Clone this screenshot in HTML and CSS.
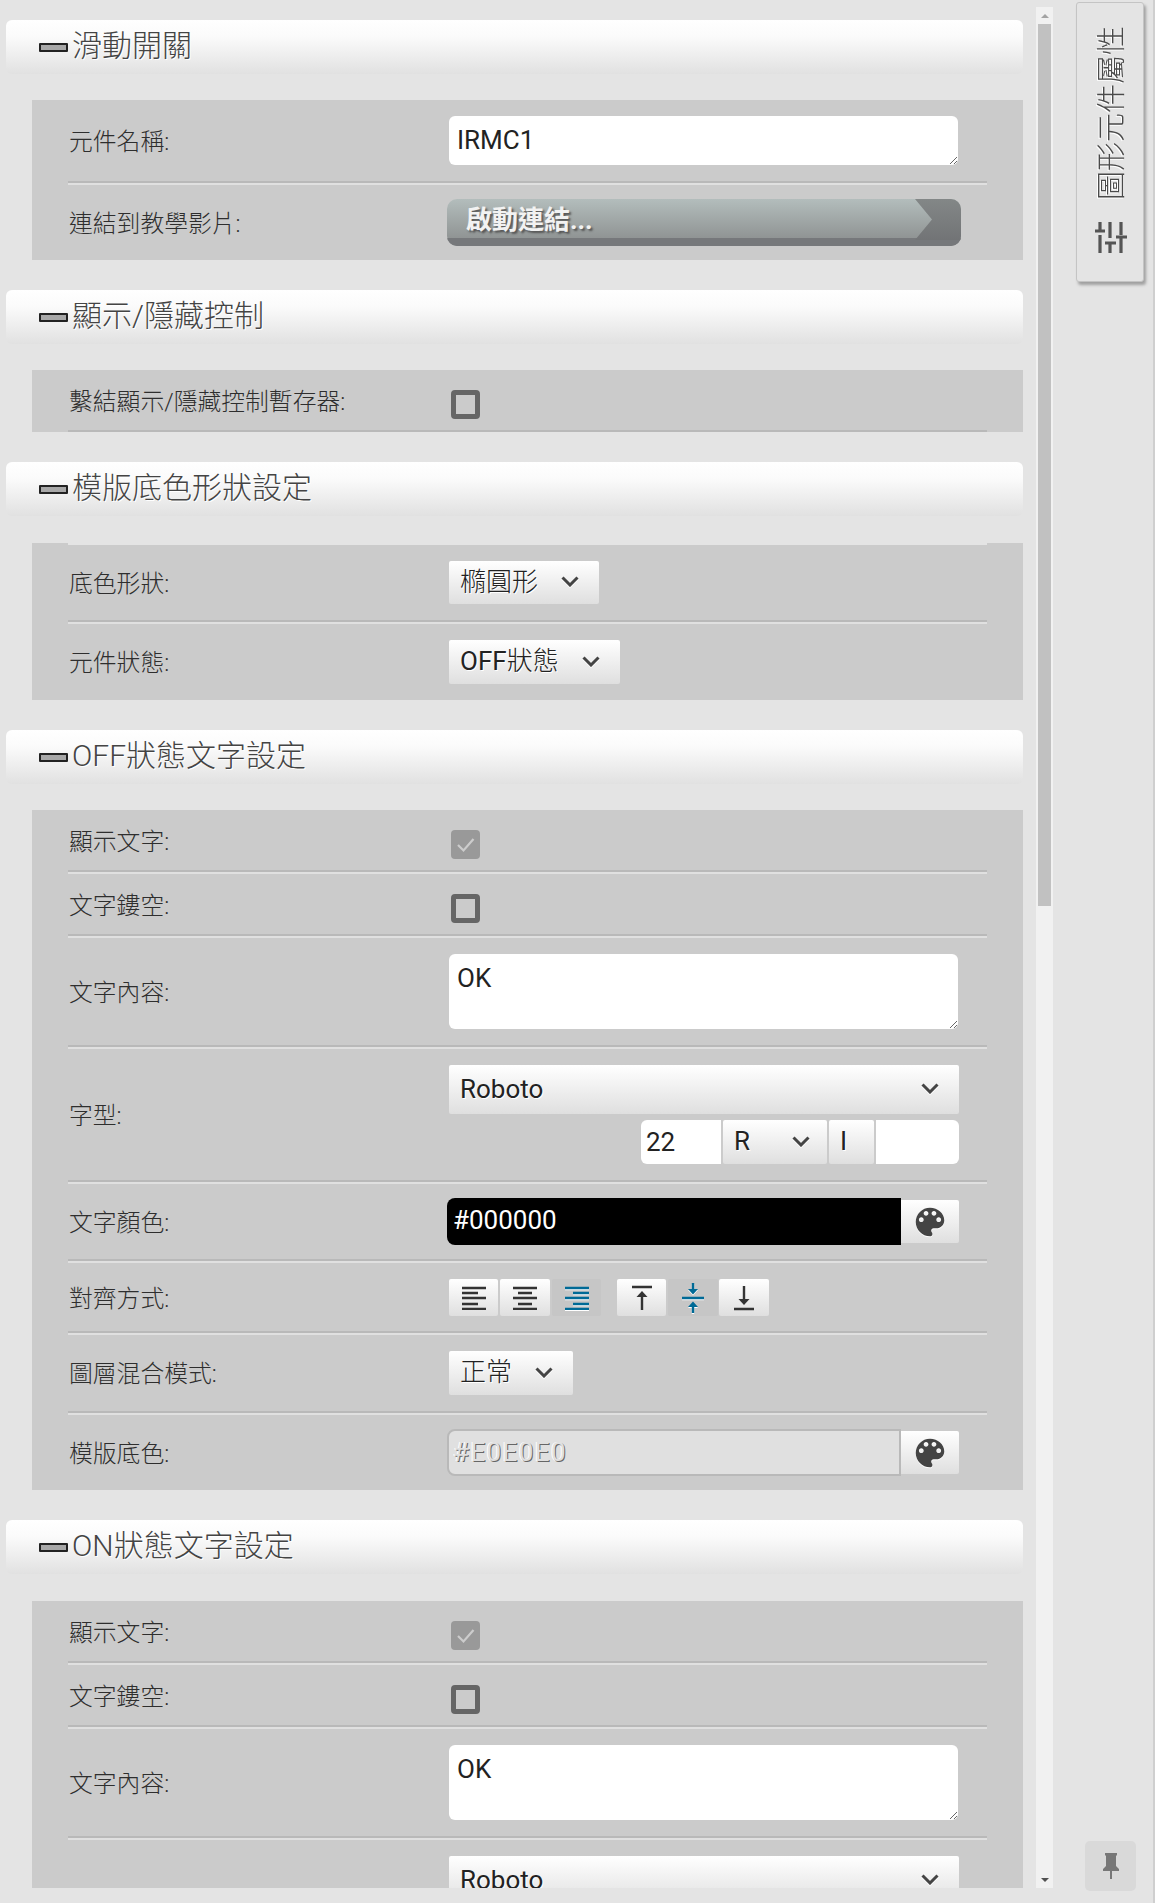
FILE: index.html
```html
<!DOCTYPE html>
<html lang="zh-Hant">
<head>
  <meta charset="UTF-8">
  <title>圖形元件屬性</title>
  <link rel="stylesheet" href="styles.css">
</head>
<body>
  <!-- shared icons -->
  <svg class="sprite" width="0" height="0">
    <symbol id="chevron" viewBox="0 0 18 11"><path d="M1.5 1.5 9 9l7.5-7.5" fill="none" stroke="currentColor" stroke-width="3"/></symbol>
    <symbol id="palette" viewBox="0 0 24 24"><path d="M12 3c-4.97 0-9 4.03-9 9s4.03 9 9 9c.83 0 1.5-.67 1.5-1.5 0-.39-.15-.74-.39-1.01-.23-.26-.38-.61-.38-.99 0-.83.67-1.5 1.5-1.5H16c2.76 0 5-2.24 5-5 0-4.42-4.03-8-9-8zm-5.5 9c-.83 0-1.5-.67-1.5-1.5S5.67 9 6.5 9 8 9.67 8 10.5 7.33 12 6.5 12zm3-4C8.67 8 8 7.33 8 6.5S8.67 5 9.5 5s1.5.67 1.5 1.5S10.33 8 9.5 8zm5 0c-.83 0-1.5-.67-1.5-1.5S13.67 5 14.5 5s1.5.67 1.5 1.5S15.33 8 14.5 8zm3 4c-.83 0-1.5-.67-1.5-1.5S16.67 9 17.5 9s1.5.67 1.5 1.5-.67 1.5-1.5 1.5z" fill="currentColor"/></symbol>
    <symbol id="check" viewBox="0 0 29 29"><path d="M7 15l5.5 5.5L22.5 9" fill="none" stroke="currentColor" stroke-width="2.2"/></symbol>
  </svg>

  <div class="panel">
    <div class="panel-scroll">

      <section class="section">
        <h2 class="section-head"><span class="minus"></span><span class="head-text">滑動開關</span></h2>
        <div class="section-body">
          <div class="row sep pad-16">
            <label class="label">元件名稱:</label>
            <textarea class="text-box name-box" readonly>IRMC1</textarea>
          </div>
          <div class="row pad-14">
            <label class="label">連結到教學影片:</label>
            <div class="link-btn">啟動連結...</div>
          </div>
        </div>
      </section>

      <section class="section">
        <h2 class="section-head"><span class="minus"></span><span class="head-text">顯示/隱藏控制</span></h2>
        <div class="section-body">
          <div class="row sep-dark pad-check">
            <label class="label">繫結顯示/隱藏控制暫存器:</label>
            <div class="checkbox"></div>
          </div>
        </div>
      </section>

      <section class="section section-low">
        <h2 class="section-head"><span class="minus"></span><span class="head-text">模版底色形狀設定</span></h2>
        <div class="section-body">
          <div class="notch"></div>
          <div class="row sep pad-16">
            <label class="label">底色形狀:</label>
            <div class="select w-150"><span class="thin">橢圓形</span><svg class="chev"><use href="#chevron"/></svg></div>
          </div>
          <div class="row pad-16">
            <label class="label">元件狀態:</label>
            <div class="select w-171"><span>OFF<span class="thin">狀態</span></span><svg class="chev"><use href="#chevron"/></svg></div>
          </div>
        </div>
      </section>

      <section class="section">
        <h2 class="section-head"><span class="minus"></span><span class="head-text">OFF狀態文字設定</span></h2>
        <div class="section-body">
          <div class="row sep pad-check">
            <label class="label">顯示文字:</label>
            <div class="checkbox checked"><svg><use href="#check"/></svg></div>
          </div>
          <div class="row sep pad-check">
            <label class="label">文字鏤空:</label>
            <div class="checkbox"></div>
          </div>
          <div class="row sep pad-16">
            <label class="label">文字內容:</label>
            <textarea class="text-box content-box" readonly>OK</textarea>
          </div>
          <div class="row sep pad-16">
            <label class="label">字型:</label>
            <div class="font-group">
              <div class="select w-full tall">Roboto<svg class="chev"><use href="#chevron"/></svg></div>
              <div class="font-opts">
                <div class="opt-size">22</div>
                <div class="select opt-weight">R<svg class="chev"><use href="#chevron"/></svg></div>
                <div class="select opt-italic">I</div>
                <div class="opt-blank"></div>
              </div>
            </div>
          </div>
          <div class="row sep pad-14">
            <label class="label">文字顏色:</label>
            <div class="color-field">
              <div class="color-value black">#000000</div>
              <div class="palette-btn"><svg><use href="#palette"/></svg></div>
            </div>
          </div>
          <div class="row sep pad-align">
            <label class="label">對齊方式:</label>
            <div class="align-tools">
              <div class="tool">
                <svg width="24" height="24" viewBox="0 0 24 24"><path d="M0 2h24M0 7h16M0 12h24M0 18h16M0 23h24" stroke="currentColor" stroke-width="2.4"/></svg>
              </div>
              <div class="tool wide">
                <svg width="24" height="24" viewBox="0 0 24 24"><path d="M0 2h24M5 7h14M0 12h24M5 18h14M0 23h24" stroke="currentColor" stroke-width="2.4"/></svg>
              </div>
              <div class="tool active">
                <svg width="24" height="24" viewBox="0 0 24 24"><path d="M0 2h24M8 7h16M0 12h24M8 18h16M0 23h24" stroke="currentColor" stroke-width="2.4"/></svg>
              </div>
              <div class="tool tool-gap">
                <svg width="22" height="26" viewBox="0 0 22 26"><path d="M1 2h20M11 25V9" stroke="currentColor" stroke-width="2.4" fill="none"/><path d="M5.5 12 11 6l5.5 6z" fill="currentColor"/></svg>
              </div>
              <div class="tool active wide">
                <svg width="22" height="30" viewBox="0 0 22 30"><path d="M0 15h22M11 0v7M11 23v7" stroke="currentColor" stroke-width="2.4" fill="none"/><path d="M6 6h10l-5 5.500zM6 24h10l-5-5.500z" fill="currentColor"/></svg>
              </div>
              <div class="tool wide tool-last">
                <svg width="22" height="26" viewBox="0 0 22 26"><path d="M1 24h20M11 1v16" stroke="currentColor" stroke-width="2.4" fill="none"/><path d="M5.500 14 11 20l5.500-6z" fill="currentColor"/></svg>
              </div>
            </div>
          </div>
          <div class="row sep pad-16">
            <label class="label">圖層混合模式:</label>
            <div class="select w-124"><span class="thin">正常</span><svg class="chev"><use href="#chevron"/></svg></div>
          </div>
          <div class="row pad-color-last">
            <label class="label">模版底色:</label>
            <div class="color-field">
              <div class="color-value disabled">#E0E0E0</div>
              <div class="palette-btn"><svg><use href="#palette"/></svg></div>
            </div>
          </div>
        </div>
      </section>

      <section class="section section-low">
        <h2 class="section-head"><span class="minus"></span><span class="head-text">ON狀態文字設定</span></h2>
        <div class="section-body">
          <div class="row sep pad-check">
            <label class="label">顯示文字:</label>
            <div class="checkbox checked"><svg><use href="#check"/></svg></div>
          </div>
          <div class="row sep pad-check">
            <label class="label">文字鏤空:</label>
            <div class="checkbox"></div>
          </div>
          <div class="row sep pad-16">
            <label class="label">文字內容:</label>
            <textarea class="text-box content-box" readonly>OK</textarea>
          </div>
          <div class="row sep pad-16">
            <div class="font-group last-font">
              <div class="select w-full tall">Roboto<svg class="chev"><use href="#chevron"/></svg></div>
            </div>
          </div>
        </div>
      </section>

    </div>
    <div class="scrollbar">
      <span class="arrow up"></span>
      <div class="thumb"></div>
      <span class="arrow down"></span>
    </div>
  </div>

  <aside class="side">
    <div class="side-tab">
      <span class="side-title">圖形元件屬性</span>
      <svg class="tune" width="32" height="32" viewBox="0 0 32 32">
        <path d="M5 0v8M0 9h10M5 13v18M15 0v16M10 21h11M15 21v10M26 0v13M21 15h11M26 15v16" fill="none" stroke="currentColor" stroke-width="3.200"/>
      </svg>
    </div>
    <div class="pin-btn">
      <svg width="16" height="26" viewBox="0 0 16 26">
        <path d="M2 0h12v2l-1 1v10l3 3v2H9v8H7v-8H0v-2l3-3V3L2 2z" fill="currentColor"/>
      </svg>
    </div>
  </aside>
</body>
</html>
```

FILE: styles.css
```css
/* Page frame */
body {
  margin: 0;
  height: 1903px;
  overflow: hidden;
  display: flex;
  background: #e4e4e4;
  border-right: 2px solid #cfcfcf;
  box-sizing: border-box;
  font-family: Roboto, "Noto Sans CJK TC", sans-serif;
  color: #333;
}
.sprite {
  position: absolute;
}
.panel {
  display: flex;
  height: 1888px;
  flex: none;
}
.panel-scroll {
  width: 1023px;
  overflow: hidden;
  padding-top: 20px;
  box-sizing: border-box;
}

/* Sections */
.section {
  margin: 0 0 30px 6px;
}
.section-head {
  display: flex;
  align-items: center;
  height: 54px;
  margin: 0;
  padding-left: 33px;
  border-radius: 6px;
  background: linear-gradient(#fff 0%, #fbfbfb 30%, #e1e1e1 100%);
  font-size: 30px;
  font-weight: 300;
  color: #444;
  text-shadow: 1px 1px 0 #fff;
}
.head-text {
  line-height: 1;
  padding-bottom: 3px;
}
.minus {
  width: 29px;
  height: 9px;
  margin-right: 4px;
  box-sizing: border-box;
  border: 2px solid #222;
  background: #a8a8a8;
  border-radius: 1px;
}
.section-body {
  margin: 26px 0 0 26px;
  padding: 0 36px;
  background: #cbcbcb;
}
.section-low .section-body {
  margin-top: 27px;
}
.notch {
  height: 2px;
  background: #e4e4e4;
}

/* Rows */
.row {
  display: flex;
  align-items: center;
}
.sep {
  border-bottom: 2px solid #b9b9b9;
  box-shadow: 0 2px 0 #e0e0e0;
  margin-bottom: 2px;
}
.sep-dark {
  border-bottom: 2px solid #b9b9b9;
}
.pad-16 {
  padding: 16px 0;
}
.pad-14 {
  padding: 14px 0;
}
.pad-check {
  padding: 20px 0 11px;
}
.pad-align {
  padding: 16px 0 15px;
}
.pad-color-last {
  padding: 14px 0;
}
.label {
  flex: none;
  width: 381px;
  padding: 2px 0 0 1px;
  box-sizing: border-box;
  font-size: 23.8px;
  font-weight: 300;
  line-height: 24px;
  color: #2e2e2e;
}
.pad-check .label {
  margin-top: -7px;
}

/* Inputs */
.text-box {
  display: block;
  width: 509px;
  margin: 0;
  padding: 7px 8px;
  border: 0;
  border-radius: 6px;
  outline: 0;
  box-sizing: border-box;
  background: #fff;
  font-family: inherit;
  font-size: 26px;
  line-height: 34px;
  color: #222;
}
.name-box {
  height: 49px;
}
.content-box {
  height: 75px;
}
.link-btn {
  position: relative;
  width: 514px;
  height: 47px;
  margin-left: -2px;
  padding-left: 19px;
  box-sizing: border-box;
  overflow: hidden;
  border-radius: 10px;
  background: linear-gradient(#b3bdbc, #898c8c);
  font-size: 26px;
  font-weight: 700;
  line-height: 43px;
  color: #f2f2f2;
  text-shadow: 2px 2px 2px #555;
}
.link-btn::before {
  content: "";
  position: absolute;
  left: 0;
  right: 0;
  bottom: 0;
  height: 8px;
  background: #76787b;
}
.link-btn::after {
  content: "";
  position: absolute;
  top: 0;
  right: 0;
  width: 46px;
  height: 41px;
  background: linear-gradient(#838787, #727476);
  clip-path: polygon(0 0, 100% 0, 100% 100%, 0 100%, 17px 50%);
}

/* Selects */
.select {
  display: flex;
  align-items: center;
  justify-content: space-between;
  height: 44px;
  padding: 0 16px 2px 11px;
  box-sizing: border-box;
  border-radius: 2px;
  background: linear-gradient(#fff, #dfdfdf);
  font-size: 26px;
  line-height: 40px;
  color: #222;
  text-shadow: 1px 1px 0 #fff;
}
.thin {
  font-weight: 300;
}
.chev {
  width: 18px;
  height: 11px;
  color: #444;
  filter: drop-shadow(0 1px 0 #fff);
}
.w-150 {
  width: 150px;
  height: 43px;
  padding-right: 20px;
}
.w-171 {
  width: 171px;
  padding-right: 20px;
}
.w-124 {
  width: 124px;
  padding-right: 20px;
}
.w-full {
  width: 510px;
  padding-right: 20px;
}
.tall {
  height: 49px;
}
.font-group {
  width: 510px;
}
.last-font {
  margin-left: 381px;
}
.font-opts {
  display: flex;
  justify-content: flex-end;
  gap: 2px;
  margin-top: 6px;
  height: 44px;
}
.opt-size {
  width: 80px;
  padding-left: 5px;
  box-sizing: border-box;
  border-radius: 6px 0 0 6px;
  background: #fff;
  font-size: 26px;
  line-height: 44px;
  color: #222;
}
.opt-weight {
  width: 104px;
  padding-right: 17px;
}
.opt-italic {
  width: 45px;
}
.opt-blank {
  width: 83px;
  border-radius: 0 6px 6px 0;
  background: #fff;
}

/* Checkboxes */
.checkbox {
  width: 29px;
  height: 29px;
  margin-left: 2px;
  box-sizing: border-box;
  border: 5px solid #666;
  border-radius: 4px;
}
.checkbox.checked {
  border: 0;
  background: #999;
  color: #ccc;
}
.checkbox svg {
  display: block;
  width: 29px;
  height: 29px;
}

/* Colour fields */
.color-field {
  display: flex;
  align-items: center;
  width: 512px;
  margin-left: -2px;
}
.color-value {
  width: 454px;
  height: 47px;
  padding-left: 6px;
  box-sizing: border-box;
  border-radius: 8px 0 0 8px;
  font-size: 26px;
  line-height: 45px;
}
.color-value.black {
  background: #000;
  color: #fff;
}
.color-value.disabled {
  padding-left: 4px;
  border: 2px solid #b9b9b9;
  background: #e0e0e0;
  color: #e0e0e0;
  letter-spacing: 1.400px;
  line-height: 42px;
  text-shadow: 1px 1px 0 #666, -1px 0 0 #fff;
}
.palette-btn {
  display: flex;
  align-items: center;
  justify-content: center;
  width: 58px;
  height: 43px;
  border-radius: 0 2px 2px 0;
  background: linear-gradient(#fff, #dfdfdf);
  color: #444;
}
.palette-btn svg {
  width: 38px;
  height: 38px;
  filter: drop-shadow(0 1px 0 #fff);
}

/* Alignment toolbar */
.align-tools {
  display: flex;
  gap: 2px;
}
.tool {
  display: flex;
  align-items: center;
  justify-content: center;
  width: 49px;
  height: 37px;
  border-radius: 2px;
  background: linear-gradient(#fff, #dfdfdf);
  color: #333;
}
.tool.wide {
  width: 50px;
}
.tool.active {
  background: #c6c6c6;
  color: #006a96;
}
.tool.active svg {
  filter: drop-shadow(0 1px 0 #fff);
}
.tool-gap {
  margin-left: 14px;
}
.tool-last {
  margin-left: -1px;
}

/* Scrollbar */
.scrollbar {
  position: relative;
  width: 17px;
  margin: 7px 0 0 13px;
  padding: 17px 2px 0;
  box-sizing: border-box;
  background: #f1f1f1;
}
.thumb {
  height: 882px;
  background: #c1c1c1;
}
.arrow {
  position: absolute;
  left: 5px;
  width: 0;
  height: 0;
  border-left: 4px solid transparent;
  border-right: 4px solid transparent;
}
.arrow.up {
  top: 7px;
  border-bottom: 4px solid #a3a3a3;
}
.arrow.down {
  bottom: 6px;
  border-top: 4px solid #505050;
}

/* Right rail */
.side {
  flex: 1;
  display: flex;
  flex-direction: column;
  justify-content: space-between;
  padding: 2px 0 12px 23px;
}
.side-tab {
  display: flex;
  flex-direction: column;
  align-items: center;
  width: 68px;
  height: 280px;
  padding-top: 23px;
  box-sizing: border-box;
  border: 1px solid #c4c4c4;
  border-radius: 3px;
  background: #e4e4e4;
  box-shadow: 2px 3px 3px #a0a0a0;
  color: #4a4a4a;
}
.side-title {
  margin-left: 4px;
  writing-mode: vertical-rl;
  text-orientation: sideways;
  transform: rotate(180deg);
  font-size: 29px;
  font-weight: 300;
  line-height: 32px;
  text-shadow: -1px -1px 0 #fff;
}
.tune {
  margin: 22px 0 0 2px;
  color: #555;
}
.pin-btn {
  display: flex;
  align-items: center;
  justify-content: center;
  width: 51px;
  height: 50px;
  margin-left: 9px;
  border-radius: 5px;
  background: #d9d9d9;
  color: #777;
}
```
